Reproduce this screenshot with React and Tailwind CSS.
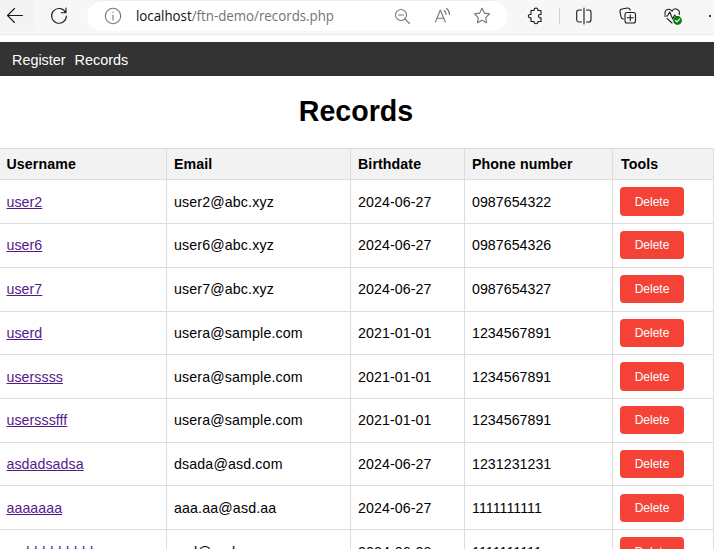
import React from 'react';

const rows = [
  ['user2', 'user2@abc.xyz', '2024-06-27', '0987654322', 'h-11', 'pb-0', 'h-[29px]'],
  ['user6', 'user6@abc.xyz', '2024-06-27', '0987654326', 'h-11', 'pb-[2px]', 'h-[28px]'],
  ['user7', 'user7@abc.xyz', '2024-06-27', '0987654327', 'h-11', 'pb-[2px]', 'h-[28px]'],
  ['userd', 'usera@sample.com', '2021-01-01', '1234567891', 'h-[43px]', 'pb-0', 'h-[28px]'],
  ['userssss', 'usera@sample.com', '2021-01-01', '1234567891', 'h-11', 'pb-0', 'h-[29px]'],
  ['usersssfff', 'usera@sample.com', '2021-01-01', '1234567891', 'h-11', 'pb-[2px]', 'h-[28px]'],
  ['asdadsadsa', 'dsada@asd.com', '2024-06-27', '1231231231', 'h-[43px]', 'pb-0', 'h-[28px]'],
  ['aaaaaaa', 'aaa.aa@asd.aa', '2024-06-27', '1111111111', 'h-11', 'pb-0', 'h-[28px]'],
  ['asddddddddd', 'asd@asd.aa', '2024-06-28', '1111111111', 'h-11', 'pb-0', 'h-[29px]'],
];

const grid = 'grid grid-cols-[167px_184px_114px_148px_101px]';
const cell = 'flex items-center border-r border-b border-[#ddd] pl-[7px]';
const nameCell = 'flex items-center border-r border-b border-[#ddd] pl-[6.5px]';

function Icon({ className, size = 18, children }) {
  return (
    <svg className={`shrink-0 ${className}`} width={size} height={size} viewBox={`0 0 ${size} ${size}`} fill="none" stroke="currentColor" strokeWidth="1.1" strokeLinecap="round" strokeLinejoin="round">
      {children}
    </svg>
  );
}

function Toolbar() {
  return (
    <div className="flex h-[35px] items-start border-b border-[#e9e9e9] bg-[#f7f7f7] text-[#1b1b1b]">
      <div className="flex h-[31px] w-[35px] shrink-0 items-center rounded-r bg-[#f3f3f3]">
        <Icon className="ml-[6px]" size={18}><path d="M16.5 8.5H1.5M8.5 1.5l-7 7 7 7" /></Icon>
      </div>
      <Icon className="mt-[7px] ml-[15px]"><path d="M15.6 5.5A7.4 7.4 0 1 0 16.4 9M16 1v4.7h-4.7" /></Icon>
      <div className="ml-[19px] flex h-[31px] w-[421px] shrink-0 items-center rounded-r-full rounded-l-full border-t border-[#eee] bg-white text-[#767676]">
        <Icon className="ml-[17px]"><circle cx="9" cy="9" r="7.7" /><path d="M9 8v5M9 5.2v.3" /></Icon>
        <div className="ml-[14px] w-[210px] font-['Open_Sans','Noto_Sans',sans-serif] text-[14px] leading-5 whitespace-nowrap">
          <svg className="block overflow-visible" width="200" height="20">
            <text x="0" y="15" textLength="198" lengthAdjust="spacingAndGlyphs" fill="#737373"><tspan fill="#111">localhost</tspan>/ftn-demo/records.php</text>
          </svg>
        </div>
        <Icon className="ml-[48px]" size={17}><circle cx="7" cy="7" r="5.5" /><path d="M4.5 7h5M11 11l4.5 4.5" /></Icon>
        <Icon className="ml-[23px]"><path d="M1.5 15 6.3 3l5 12M3 11.2h6.8M10 3.5c1.5 1 2 2.2 2 4M12.5 1.5c2 1.3 3 3.4 3 6" /></Icon>
        <Icon className="ml-[21px]"><path d="m9 1.3 2.3 4.8 5.2.8-3.8 3.7.9 5.2L9 13.3l-4.6 2.5.9-5.2L1.5 6.9l5.2-.8Z" /></Icon>
      </div>
      <Icon className="mt-[7px] ml-[19px]"><path d="M4 3.5h3.1C6.9 1.9 7.7 1 9 1s2.1.9 1.9 2.5H14v4c-1.6-.2-2.5.4-2.5 1.6s.9 1.9 2.5 1.7v3.7h-3.1c.2 1.5-.6 2.3-1.9 2.3s-2.1-.8-1.9-2.3H4v-3.7c-1.6.2-2.7-.5-2.7-1.7S2.4 7.3 4 7.5Z" /></Icon>
      <div className="mt-2 ml-[14px] h-4 w-px bg-[#cfcfcf]" />
      <Icon className="mt-[7px] ml-[15px]"><path d="M6.5 3H4a2.3 2.3 0 0 0-2.3 2.3v7.4A2.3 2.3 0 0 0 4 15h2.5M9 1v16M11.5 3h2.3A2.3 2.3 0 0 1 16 5.3v7.4a2.3 2.3 0 0 1-2.2 2.3h-2.3" /></Icon>
      <Icon className="mt-[7px] ml-[26px]"><path d="M4.5 12C2.7 11.8 2.1 10.9 1.9 9.5L1 4.5C.8 3 1.5 2.2 3 2l5.5-1c1.5-.2 2.5.6 2.8 2.2" /><rect x="6" y="5.5" width="10.5" height="10.5" rx="2" /><path d="M11.25 7.8v6M8.3 10.8h6" /></Icon>
      <Icon className="mt-[7px] ml-[26px]" size={20}><path d="M2 7.5C1.3 2 7 .9 9 4.2 11-.1 17.7 2 16.2 7.5M1.5 9h3l2.2-4 3 7 2-4 1 1.5h3M4 11.3l5 4.7" /><circle cx="14.5" cy="13.5" r="4.4" fill="#107c10" stroke="none" /><path d="m12.5 13.5 1.4 1.4 2.7-2.8" stroke="white" /></Icon>
      <span className="mt-[15px] ml-[26px] size-0.5 shrink-0 rounded-full bg-black" />
    </div>
  );
}

export default function App() {
  return (
    <main className="h-[549px] w-[714px] overflow-hidden bg-white font-['Liberation_Sans',Arial,sans-serif] text-black">
      <Toolbar />
      <nav className="mt-[7px] flex h-[34px] items-center gap-[9px] bg-[#333] pt-px pl-3 text-[14.4px] leading-5 text-white">
        <a>Register</a><a>Records</a>
      </nav>
      <h1 className="flex h-[72px] items-center justify-center pr-[2px] pb-[2px] text-[28.6px] leading-9 font-bold">Records</h1>
      <section className="border-t border-[#ddd] text-[14.2px] leading-5">
        <div className={`${grid} h-[31px] bg-[#f2f2f2] font-bold tracking-[0.1px]`}>
          {['Username', 'Email', 'Birthdate', 'Phone number'].map((title) => (
            <div key={title} className={title === 'Username' ? nameCell : cell}>{title}</div>
          ))}
          <div className="flex items-center border-r border-b border-[#ddd] pl-2">Tools</div>
        </div>
        {rows.map(([name, email, birth, phone, height, lift, button]) => (
          <div key={name} className={`${grid} ${height}`}>
            <div className={`${nameCell} ${lift} tracking-[0.06px]`}><a className="text-[#551a8b] underline">{name}</a></div>
            <div className={`${cell} ${lift} tracking-[0.15px]`}>{email}</div>
            <div className={`${cell} ${lift} tracking-[0.08px]`}>{birth}</div>
            <div className={`${cell} ${lift} tracking-[0.04px]`}>{phone}</div>
            <div className={`${cell} ${lift}`}>
              <button className={`${button} w-16 rounded bg-[#f44336] text-[12px] text-white`}>Delete</button>
            </div>
          </div>
        ))}
      </section>
    </main>
  );
}
